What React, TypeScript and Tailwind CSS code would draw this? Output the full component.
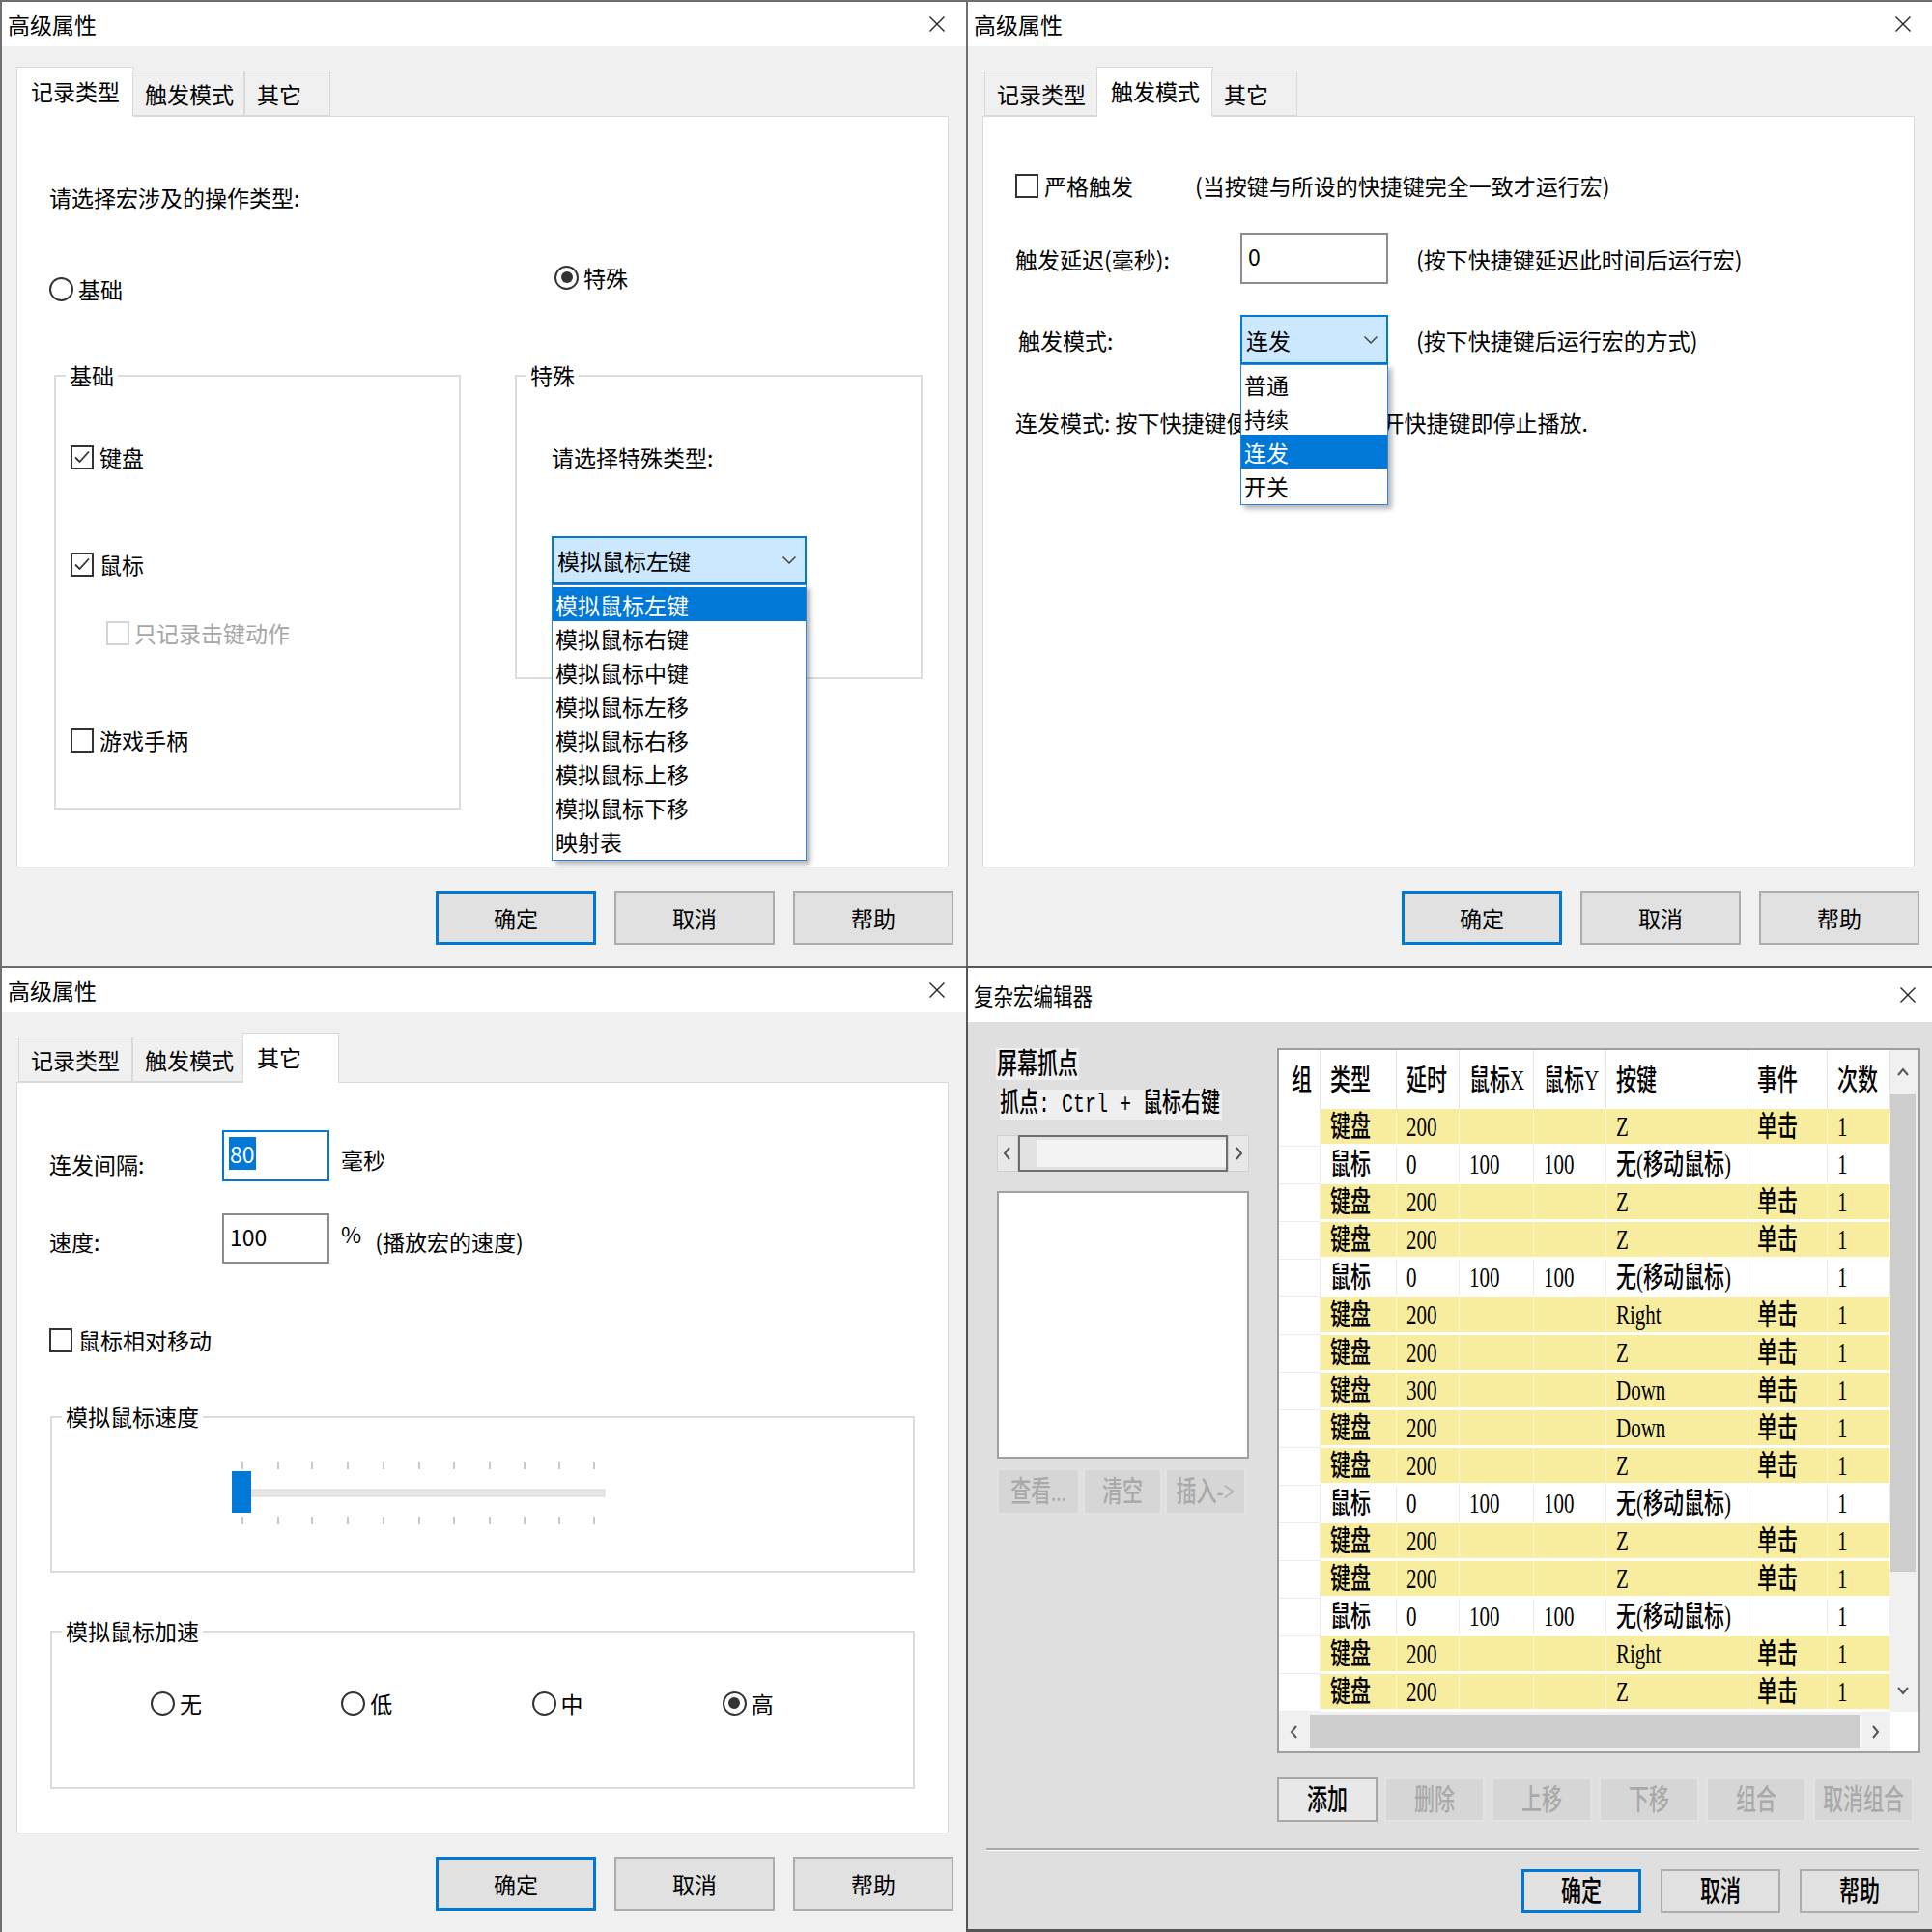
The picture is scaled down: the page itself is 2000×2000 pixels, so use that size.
import React from "react";

type TabSpec = { label: string; base: string; active: string };

const TABS: TabSpec[] = [
  { label: "记录类型", base: "w-[118px]", active: "w-[122px]" },
  { label: "触发模式", base: "w-[116px]", active: "w-[121px]" },
  { label: "其它", base: "w-[89px]", active: "w-[100px]" },
];

const CloseX = () => (
  <svg width="18" height="18" viewBox="0 0 18 18">
    <path d="M1.5 1.5L16.5 16.5M16.5 1.5L1.5 16.5" stroke="#222" strokeWidth="1.4" />
  </svg>
);

const Chevron = () => (
  <svg width="16" height="10" viewBox="0 0 16 10">
    <path d="M1.5 1.5L8 8L14.5 1.5" fill="none" stroke="#444" strokeWidth="1.5" />
  </svg>
);

const CheckMark = () => (
  <svg width="18" height="16" viewBox="0 0 18 16">
    <path d="M2 8.5L6.5 13L16 2.5" fill="none" stroke="#333" strokeWidth="1.8" />
  </svg>
);

function CheckBox({ label, checked = false, disabled = false }: { label: string; checked?: boolean; disabled?: boolean }) {
  return (
    <div className="flex h-[30px] items-center">
      <span
        className={
          disabled
            ? "flex h-[25px] w-[24px] shrink-0 items-center justify-center border-2 border-[#d4d4d4] bg-white"
            : "flex h-[25px] w-[24px] shrink-0 items-center justify-center border-2 border-[#333333] bg-white"
        }
      >
        {checked ? <CheckMark /> : null}
      </span>
      <span className={disabled ? "ml-[5px] whitespace-nowrap text-[#a6a6a6]" : "ml-[6px] whitespace-nowrap"}>{label}</span>
    </div>
  );
}

function Radio({ label, checked = false }: { label: string; checked?: boolean }) {
  return (
    <div className="flex h-[30px] items-center">
      <span className="flex h-[25px] w-[25px] shrink-0 items-center justify-center rounded-full border-2 border-[#333333] bg-white">
        {checked ? <span className="h-[12px] w-[12px] rounded-full bg-[#333333]" /> : null}
      </span>
      <span className="ml-[5px] whitespace-nowrap">{label}</span>
    </div>
  );
}

function Group({ label, className, children }: { label: string; className: string; children?: React.ReactNode }) {
  return (
    <div className={"relative shrink-0 border-2 border-[#dcdcdc] " + className}>
      <span className="absolute -top-[17px] left-[10px] bg-white px-[4px] leading-[30px]">{label}</span>
      {children}
    </div>
  );
}

function ComboOpen({
  value,
  items,
  selected,
  wClass,
  hClass,
}: {
  value: string;
  items: string[];
  selected: string;
  wClass: string;
  hClass: string;
}) {
  return (
    <div className={"relative shrink-0 " + wClass}>
      <div className={"flex items-center justify-between border-2 border-[#0078d7] bg-[#cce8ff] pl-[4px] pr-[8px] " + hClass}>
        <span>{value}</span>
        <Chevron />
      </div>
      <div className="absolute left-0 top-full z-30 w-full border border-[#2b86d9] bg-white py-[2px] shadow-[4px_4px_5px_rgba(0,0,0,0.28)]">
        {items.map((it) => (
          <div
            key={it}
            className={
              it === selected
                ? "flex h-[35px] items-center bg-[#0078d7] pl-[3px] text-white"
                : "flex h-[35px] items-center pl-[3px]"
            }
          >
            {it}
          </div>
        ))}
      </div>
    </div>
  );
}

function DlgButton({ label, primary = false }: { label: string; primary?: boolean }) {
  return (
    <div
      className={
        primary
          ? "flex h-[56px] w-[166px] items-center justify-center border-[3px] border-[#0078d7] bg-[#e1e1e1]"
          : "flex h-[56px] w-[166px] items-center justify-center border-2 border-[#adadad] bg-[#e1e1e1]"
      }
    >
      {label}
    </div>
  );
}

function AdvancedShell({ active, children }: { active: number; children: React.ReactNode }) {
  return (
    <div className="flex h-[1000px] w-[1000px] flex-col border-l-2 border-t-2 border-[#6f6f6f] bg-[#f0f0f0] text-[23px] leading-[30px]">
      <div className="flex h-[46px] shrink-0 items-center justify-between bg-white pl-[6px] pr-[21px]">
        <span>高级属性</span>
        <CloseX />
      </div>
      <div className="pl-[15px] pr-[18px] pt-[25px]">
        <div className="relative z-10 flex h-[47px] items-end pl-[2px]">
          {TABS.map((t, i) =>
            i === active ? (
              <div
                key={t.label}
                className={
                  "-mx-[2px] -mb-px flex h-[52px] shrink-0 items-center border border-b-0 border-[#d9d9d9] bg-white pb-[4px] pl-[14px] " +
                  t.active
                }
              >
                {t.label}
              </div>
            ) : (
              <div
                key={t.label}
                className={"flex h-[47px] shrink-0 items-center border border-[#d9d9d9] bg-[#f0f0f0] pl-[12px] " + t.base}
              >
                {t.label}
              </div>
            )
          )}
        </div>
        <div className="relative h-[778px] border border-[#d9d9d9] bg-white">{children}</div>
      </div>
      <div className="mt-[24px] flex justify-end gap-[19px] pr-[13px]">
        <DlgButton label="确定" primary />
        <DlgButton label="取消" />
        <DlgButton label="帮助" />
      </div>
    </div>
  );
}

function RecordTypePanel() {
  return (
    <div className="pl-[33px] pt-[68px]">
      <div className="h-[30px] whitespace-nowrap">请选择宏涉及的操作类型:</div>
      <div className="mt-[53px] flex items-start">
        <div className="mt-[12px] w-[523px]">
          <Radio label="基础" />
        </div>
        <Radio label="特殊" checked />
      </div>
      <div className="mt-[74px] flex items-start">
        <Group label="基础" className="ml-[5px] h-[450px] w-[421px] pl-[15px] pt-[68px]">
          <CheckBox label="键盘" checked />
          <div className="mt-[81px]">
            <CheckBox label="鼠标" checked />
          </div>
          <div className="ml-[37px] mt-[41px]">
            <CheckBox label="只记录击键动作" disabled />
          </div>
          <div className="mt-[81px]">
            <CheckBox label="游戏手柄" />
          </div>
        </Group>
        <Group label="特殊" className="ml-[56px] h-[315px] w-[422px] pl-[36px] pt-[68px]">
          <div className="h-[30px] whitespace-nowrap">请选择特殊类型:</div>
          <div className="mt-[67px]">
            <ComboOpen
              value="模拟鼠标左键"
              items={["模拟鼠标左键", "模拟鼠标右键", "模拟鼠标中键", "模拟鼠标左移", "模拟鼠标右移", "模拟鼠标上移", "模拟鼠标下移", "映射表"]}
              selected="模拟鼠标左键"
              wClass="w-[264px]"
              hClass="h-[50px]"
            />
          </div>
        </Group>
      </div>
    </div>
  );
}

function TriggerPanel() {
  return (
    <div className="pl-[33px] pt-[56px]">
      <div className="flex h-[30px] items-center">
        <div className="w-[186px] shrink-0">
          <CheckBox label="严格触发" />
        </div>
        <span className="whitespace-nowrap">(当按键与所设的快捷键完全一致才运行宏)</span>
      </div>
      <div className="mt-[34px] flex items-center">
        <div className="w-[233px] shrink-0 whitespace-nowrap">触发延迟(毫秒):</div>
        <div className="h-[53px] w-[153px] shrink-0 border-2 border-[#8c8c8c] bg-white pl-[6px] pt-[5px] leading-[34px]">0</div>
        <div className="ml-[29px] whitespace-nowrap">(按下快捷键延迟此时间后运行宏)</div>
      </div>
      <div className="mt-[32px] flex items-center">
        <div className="ml-[3px] w-[230px] shrink-0">触发模式:</div>
        <ComboOpen value="连发" items={["普通", "持续", "连发", "开关"]} selected="连发" wClass="w-[153px]" hClass="h-[51px]" />
        <div className="ml-[29px] whitespace-nowrap">(按下快捷键后运行宏的方式)</div>
      </div>
      <div className="mt-[45px] whitespace-nowrap">连发模式: 按下快捷键便循环运行宏松开快捷键即停止播放.</div>
    </div>
  );
}

const TICKS = [14, 51, 86, 123, 160, 197, 233, 270, 306, 342, 378];

const Slider = () => (
  <svg width="400" height="72" viewBox="0 0 400 72">
    {TICKS.map((x) => (
      <line key={"t" + x} x1={x} x2={x} y1={3} y2={11} stroke="#b4b4b4" strokeWidth="1.5" />
    ))}
    {TICKS.map((x) => (
      <line key={"b" + x} x1={x} x2={x} y1={60} y2={68} stroke="#b4b4b4" strokeWidth="1.5" />
    ))}
    <rect x="8" y="32" width="381" height="7" fill="#e7e7e7" stroke="#d6d6d6" strokeWidth="1" />
    <rect x="3" y="13" width="20" height="43" fill="#0078d7" />
  </svg>
);

function OtherPanel() {
  return (
    <div className="pl-[33px] pt-[49px]">
      <div className="flex items-start">
        <div className="mt-[20px] w-[179px] shrink-0">连发间隔:</div>
        <div className="h-[53px] w-[111px] shrink-0 border-2 border-[#0078d7] bg-white pl-[5px] pt-[5px]">
          <span className="inline-block bg-[#0078d7] px-[1px] leading-[34px] text-white">80</span>
        </div>
        <div className="ml-[12px] mt-[15px]">毫秒</div>
      </div>
      <div className="mt-[33px] flex items-start">
        <div className="mt-[14px] w-[179px] shrink-0">速度:</div>
        <div className="h-[52px] w-[111px] shrink-0 border-2 border-[#8c8c8c] bg-white pl-[6px] pt-[5px] leading-[34px]">100</div>
        <div className="ml-[12px] mt-[6px]">%</div>
        <div className="ml-[14px] mt-[14px] whitespace-nowrap">(播放宏的速度)</div>
      </div>
      <div className="mt-[64px]">
        <CheckBox label="鼠标相对移动" />
      </div>
      <Group label="模拟鼠标速度" className="ml-[1px] mt-[64px] h-[162px] w-[895px] pl-[183px] pt-[42px]">
        <Slider />
      </Group>
      <Group label="模拟鼠标加速" className="ml-[1px] mt-[60px] h-[164px] w-[895px] pl-[102px] pt-[58px]">
        <div className="flex">
          {["无", "低", "中", "高"].map((r) => (
            <div key={r} className="w-[199px]">
              <Radio label={r} checked={r === "高"} />
            </div>
          ))}
        </div>
      </Group>
    </div>
  );
}

type Row = [string, string, string, string, string, string, string];

const ROWS: Row[] = [
  ["键盘", "200", "", "", "Z", "单击", "1"],
  ["鼠标", "0", "100", "100", "无(移动鼠标)", "", "1"],
  ["键盘", "200", "", "", "Z", "单击", "1"],
  ["键盘", "200", "", "", "Z", "单击", "1"],
  ["鼠标", "0", "100", "100", "无(移动鼠标)", "", "1"],
  ["键盘", "200", "", "", "Right", "单击", "1"],
  ["键盘", "200", "", "", "Z", "单击", "1"],
  ["键盘", "300", "", "", "Down", "单击", "1"],
  ["键盘", "200", "", "", "Down", "单击", "1"],
  ["键盘", "200", "", "", "Z", "单击", "1"],
  ["鼠标", "0", "100", "100", "无(移动鼠标)", "", "1"],
  ["键盘", "200", "", "", "Z", "单击", "1"],
  ["键盘", "200", "", "", "Z", "单击", "1"],
  ["鼠标", "0", "100", "100", "无(移动鼠标)", "", "1"],
  ["键盘", "200", "", "", "Right", "单击", "1"],
  ["键盘", "200", "", "", "Z", "单击", "1"],
];

const COLS = ["w-[79px]", "w-[65px]", "w-[77px]", "w-[75px]", "w-[146px]", "w-[83px]", "w-[65px]"];
const HEAD = ["类型", "延时", "鼠标X", "鼠标Y", "按键", "事件", "次数"];

const T = ({ children }: { children: React.ReactNode }) => (
  <span className="inline-block scale-y-[1.4] whitespace-nowrap">{children}</span>
);

const Arrow = ({ d }: { d: string }) => (
  <svg width="14" height="16" viewBox="0 0 14 16">
    <path d={d} fill="none" stroke="#555" strokeWidth="2" />
  </svg>
);

function SmallBtn({ label, w, enabled = false }: { label: string; w: string; enabled?: boolean }) {
  return (
    <div
      className={
        enabled
          ? "flex h-full shrink-0 items-center justify-center border-2 border-[#a8a8a8] bg-[#e8e8e8] " + w
          : "flex h-full shrink-0 items-center justify-center border-2 border-[#e2e2e2] bg-[#d6d6d6] text-[#a9a9a9] " + w
      }
    >
      <T>{label}</T>
    </div>
  );
}

function MacroEditor() {
  return (
    <div className="flex h-[1000px] w-[1000px] flex-col border-b-[3px] border-l-2 border-t-2 border-[#555555] bg-[#dfdfdf] font-['Liberation_Serif','Noto_Sans_CJK_SC',serif] text-[21px] font-medium leading-[30px]">
      <div className="flex h-[56px] shrink-0 items-center justify-between bg-white pl-[6px] pr-[16px] font-['Noto_Sans_CJK_SC',sans-serif] font-normal">
        <span className="inline-block scale-y-[1.2] text-[20.5px]">复杂宏编辑器</span>
        <CloseX />
      </div>
      <div className="flex items-start pl-[30px] pt-[27px]">
        <div className="flex w-[261px] shrink-0 flex-col items-start">
          <div className="-ml-px h-[33px] bg-[#efefef] px-px leading-[33px]">
            <T>屏幕抓点</T>
          </div>
          <div className="ml-[3px] mt-[10px] h-[31px] bg-[#efefef] pr-[2px] font-['Liberation_Mono','Noto_Sans_CJK_SC',monospace] text-[20px] leading-[31px]">
            <T>抓点: Ctrl + 鼠标右键</T>
          </div>
          <div className="mt-[16px] flex h-[38px] w-[261px]">
            <div className="flex w-[22px] items-center justify-center border border-[#d0d0d0] bg-[#e8e8e8]">
              <Arrow d="M9 2L4 8L9 14" />
            </div>
            <div className="flex flex-1 border-2 border-[#6e6e6e] bg-[#e2e2e2]">
              <div className="my-[3px] ml-[17px] flex-1 bg-[#f3f3f3]" />
            </div>
            <div className="flex w-[22px] items-center justify-center border border-[#d0d0d0] bg-[#e8e8e8]">
              <Arrow d="M5 2L10 8L5 14" />
            </div>
          </div>
          <div className="mt-[20px] h-[277px] w-[261px] border-2 border-[#a0a0a0] bg-white" />
          <div className="mt-[10px] flex h-[48px] gap-[3px]">
            <SmallBtn label="查看..." w="w-[86px]" />
            <SmallBtn label="清空" w="w-[82px]" />
            <SmallBtn label="插入->" w="w-[84px]" />
          </div>
        </div>
        <div className="ml-[29px] w-[666px] shrink-0">
          <div className="flex h-[730px] flex-col border-2 border-[#9e9e9e] bg-white">
            <div className="flex">
              <div className="w-[633px]">
                <div className="flex h-[61px]">
                  <div className="flex w-[43px] items-center border-r border-[#e4e4e4] pl-[13px]">
                    <T>组</T>
                  </div>
                  {HEAD.map((h, i) => (
                    <div key={h} className={"flex items-center border-r border-[#e4e4e4] pl-[10px] " + COLS[i]}>
                      <T>{h}</T>
                    </div>
                  ))}
                </div>
                {ROWS.map((r, ri) => {
                  const yellow = r[0] === "键盘";
                  return (
                    <div key={ri} className="flex h-[39px]">
                      <div className="w-[43px] border-b border-r border-[#ececec] bg-white" />
                      {r.map((c, ci) => (
                        <div
                          key={ci}
                          className={
                            yellow
                              ? "flex items-center border-b-[3px] border-r border-b-white border-r-[#fbf5cf] bg-[#f8ed9e] pl-[10px] " + COLS[ci]
                              : "flex items-center border-b-[3px] border-r border-b-white border-r-[#ebebeb] bg-white pl-[10px] " + COLS[ci]
                          }
                        >
                          <T>{c}</T>
                        </div>
                      ))}
                    </div>
                  );
                })}
              </div>
              <div className="flex w-[29px] flex-col bg-[#f0f0f0] pr-[3px]">
                <div className="flex h-[45px] items-center justify-center">
                  <Arrow d="M2 11L7 5L12 11" />
                </div>
                <div className="h-[495px] bg-[#cdcdcd]" />
                <div className="flex-1" />
                <div className="flex h-[45px] items-center justify-center">
                  <Arrow d="M2 5L7 11L12 5" />
                </div>
              </div>
            </div>
            <div className="flex h-[41px] items-center bg-[#f0f0f0]">
              <div className="flex w-[32px] justify-center">
                <Arrow d="M9 2L4 8L9 14" />
              </div>
              <div className="h-[35px] w-[569px] bg-[#cdcdcd]" />
              <div className="flex w-[32px] justify-center">
                <Arrow d="M5 2L10 8L5 14" />
              </div>
              <div className="h-full flex-1 bg-white" />
            </div>
          </div>
          <div className="mt-[25px] flex h-[46px] gap-[7px]">
            <SmallBtn label="添加" w="w-[104px]" enabled />
            <SmallBtn label="删除" w="w-[104px]" />
            <SmallBtn label="上移" w="w-[104px]" />
            <SmallBtn label="下移" w="w-[104px]" />
            <SmallBtn label="组合" w="w-[104px]" />
            <SmallBtn label="取消组合" w="w-[104px]" />
          </div>
        </div>
      </div>
      <div className="ml-[19px] mr-[13px] mt-[27px] h-[3px] border-b border-white bg-[#a9a9a9]" />
      <div className="mt-[19px] flex justify-end gap-[20px] pr-[13px]">
        <div className="flex h-[45px] w-[124px] items-center justify-center border-[3px] border-[#0078d7] bg-[#e1e1e1]">
          <T>确定</T>
        </div>
        <div className="flex h-[45px] w-[124px] items-center justify-center border-2 border-[#adadad] bg-[#e1e1e1]">
          <T>取消</T>
        </div>
        <div className="flex h-[45px] w-[124px] items-center justify-center border-2 border-[#adadad] bg-[#e1e1e1]">
          <T>帮助</T>
        </div>
      </div>
    </div>
  );
}

export default function App() {
  return (
    <div className="grid h-[2000px] w-[2000px] grid-cols-[1000px_1000px] grid-rows-[1000px_1000px] overflow-hidden bg-white font-['Noto_Sans_CJK_SC',sans-serif] text-black">
      <AdvancedShell active={0}>
        <RecordTypePanel />
      </AdvancedShell>
      <AdvancedShell active={1}>
        <TriggerPanel />
      </AdvancedShell>
      <AdvancedShell active={2}>
        <OtherPanel />
      </AdvancedShell>
      <MacroEditor />
    </div>
  );
}
